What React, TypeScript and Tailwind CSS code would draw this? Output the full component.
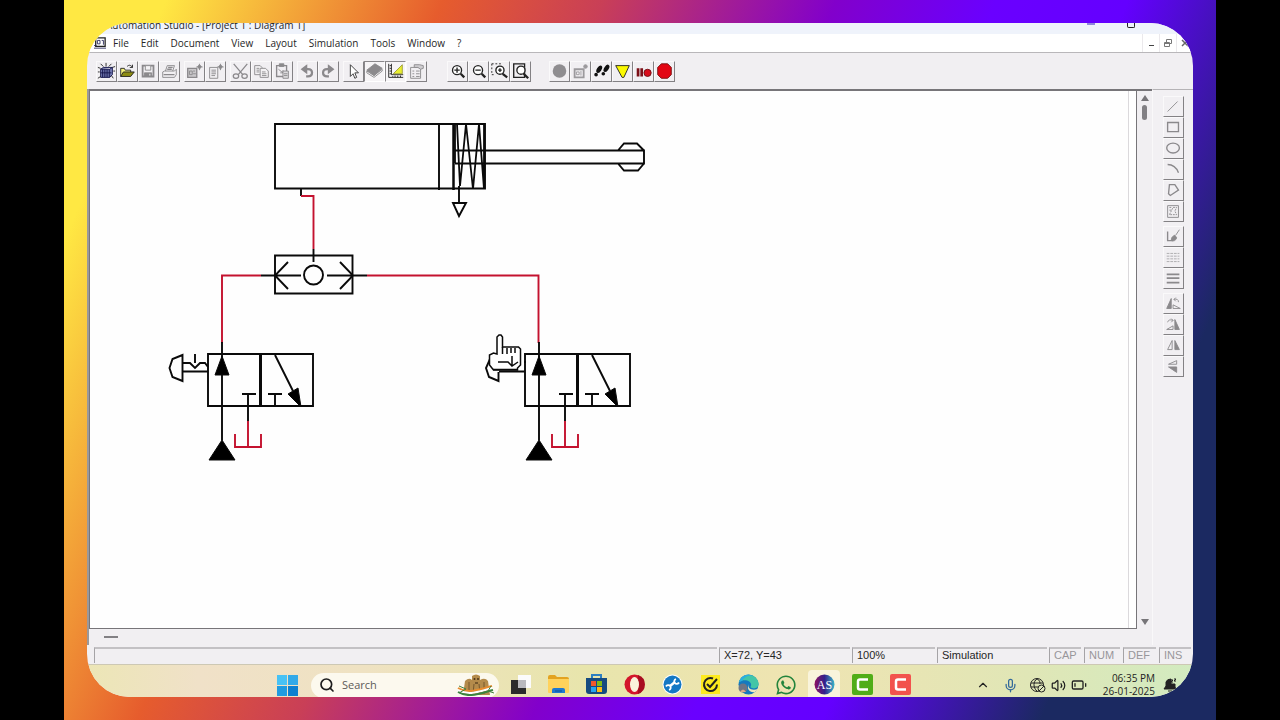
import type { ReactNode } from 'react';
import { clsx } from 'clsx';
import { BatteryLow, ChevronUp, Mic, Search, Volume2 } from 'lucide-react';
import { FaWhatsapp } from 'react-icons/fa';

const menus = ['File', 'Edit', 'Document', 'View', 'Layout', 'Simulation', 'Tools', 'Window', '?'];

type Tool = { name: string; icon: ReactNode; pressed?: boolean };

const GREY = '#8b898c';

const fileTools: Tool[] = [
  {
    name: 'New project',
    icon: (
      <g stroke="#14144a" fill="none">
        <path d="M4 8h10v9H4z M14 8l3-2v8l-3 3 M4 8l3-2h10" fill="#7c84bc" />
        <path d="M6 8v9 M8 8v9 M10 8v9 M12 8v9 M4 12h12" />
        <path d="M10 1v4 M4 2l3 3 M16 2l-3 3 M1 6l3 1 M20 5l-3 1 M1 18l3-2 M18 18l-2-3 M18 10h2 M1 11h2" stroke="#222" />
      </g>
    ),
  },
  {
    name: 'Open',
    icon: (
      <g stroke="#222" fill="none">
        <path d="M3 16V7h4l1 2h6v2" fill="#f5f27a" />
        <path d="M3 16l3-5h12l-4 5z" fill="#8d8c12" />
        <path d="M10 5c2-2 4-2 6 1 M16 3v3h-3" />
      </g>
    ),
  },
  {
    name: 'Save',
    icon: (
      <g stroke={GREY} fill="none">
        <path d="M4 4h12v12H4z" strokeWidth="2" />
        <path d="M7 4h6v5H7z" fill="#f4f2f4" />
        <path d="M6 12h8v4H6z" fill={GREY} />
        <path d="M12 13v2" stroke="#fff" />
      </g>
    ),
  },
  {
    name: 'Print',
    icon: (
      <g stroke={GREY} fill="none">
        <path d="M6 10l2-6h8l-2 6" />
        <path d="M3 11l2-1h11l2-2v6l-2 3H3z" />
        <path d="M4 14h12 M9 6h5 M8 8h5" strokeWidth="1.5" />
      </g>
    ),
  },
];

const insertTools: Tool[] = [
  {
    name: 'Insert diagram',
    icon: (
      <g stroke={GREY} fill="none">
        <path d="M3 7h10v10H3z" fill="#c9c7ca" strokeWidth="1.5" />
        <path d="M5 10h3v4H5z M9 10h2 M9 13h3" />
        <path d="M16 2v7 M12.500 5.500h7 M14 5l2-2 2 2-2 3z" fill={GREY} />
      </g>
    ),
  },
  {
    name: 'Insert report',
    icon: (
      <g stroke={GREY} fill="none">
        <path d="M4 6h9v12H4z" />
        <path d="M6 9h5 M6 11h5 M6 13h5 M6 15h4" />
        <path d="M16 2v7 M12.500 5.500h7 M14 5l2-2 2 2-2 3z" fill={GREY} />
      </g>
    ),
  },
];

const editTools: Tool[] = [
  {
    name: 'Cut',
    icon: (
      <g stroke={GREY} fill="none" strokeWidth="1.400">
        <path d="M3 2l10 12 M18 2L8 14" />
        <ellipse cx="5.500" cy="15.500" rx="3" ry="2.500" />
        <ellipse cx="15" cy="15.500" rx="3" ry="2.500" />
      </g>
    ),
  },
  {
    name: 'Copy',
    icon: (
      <g stroke={GREY} fill="#f4f2f4">
        <path d="M3 4h6l2 2v8H3z" />
        <path d="M9 7h6l3 3v7H9z" />
        <path d="M5 7h3 M5 9h3 M5 11h3 M11 11h4 M11 13h5 M11 15h5" />
      </g>
    ),
  },
  {
    name: 'Paste',
    icon: (
      <g stroke={GREY} fill="none">
        <path d="M4 4h11v12H4z" strokeWidth="1.500" />
        <path d="M7 2h5v3H7z" fill={GREY} />
        <path d="M6 8l5 4 M11 9v3H8" />
        <path d="M11 10h6v8h-6z" fill="#dddbde" />
        <path d="M12 13h4 M12 15h4" />
      </g>
    ),
  },
];

const historyTools: Tool[] = [
  {
    name: 'Undo',
    icon: <path d="M9 16h2c6 0 6-8 0-8H6 M9 5L5 8l4 3z" stroke={GREY} fill="none" strokeWidth="2.500" />,
  },
  {
    name: 'Redo',
    icon: <path d="M11 16H9c-6 0-6-8 0-8h5 M11 5l4 3-4 3z" stroke={GREY} fill="none" strokeWidth="2.500" />,
  },
];

const pointerTools: Tool[] = [
  {
    name: 'Select',
    icon: <path d="M7 3v13l3-3 2 5 2-1-2-5h4z" fill="#fff" stroke="#333" />,
  },
  {
    name: 'Layers',
    pressed: true,
    icon: (
      <g stroke={GREY}>
        <path d="M2 12l8 5 9-7v-2l-9 7-8-5z" fill="#f7f5f7" />
        <path d="M2 9l9-7 8 5-9 8z" fill={GREY} />
      </g>
    ),
  },
  {
    name: 'Rulers',
    pressed: true,
    icon: (
      <g fill="none">
        <path d="M3 2v15h16" stroke="#222" />
        <path d="M6 2v12h13" stroke="#222" />
        <path d="M4 4h2 M4 7h2 M4 10h2 M4 13h2 M7 16h1 M10 15v2 M13 15v2 M16 15v2" stroke="#222" />
        <path d="M8 13L18 3v10z" fill="#e9ef2e" stroke="#9b9b3a" />
      </g>
    ),
  },
  {
    name: 'Properties',
    icon: (
      <g stroke={GREY} fill="none">
        <path d="M4 6h11v12H4z" />
        <path d="M8 3h6l4 1v3l-3 1-3-2H8z" fill="#cfcdd0" />
        <path d="M6 10h2 M10 10h4 M6 13h2 M10 13h4 M6 16h2 M10 16h4" />
      </g>
    ),
  },
];

const zoomTools: Tool[] = [
  {
    name: 'Zoom in',
    icon: (
      <g stroke="#222" fill="none">
        <circle cx="10" cy="9" r="5" fill="#fff" strokeWidth="1.500" />
        <path d="M7 9h6 M10 6v6" strokeWidth="1.500" />
        <path d="M14 13l4 4" strokeWidth="2.500" />
      </g>
    ),
  },
  {
    name: 'Zoom out',
    icon: (
      <g stroke="#222" fill="none">
        <circle cx="10" cy="9" r="5" fill="#fff" strokeWidth="1.500" />
        <path d="M7 9h6" strokeWidth="1.500" />
        <path d="M14 13l4 4" strokeWidth="2.500" />
      </g>
    ),
  },
  {
    name: 'Zoom to selection',
    icon: (
      <g stroke="#222" fill="none">
        <path d="M2 2h11 M2 2v12h4" strokeDasharray="2 2" />
        <circle cx="11" cy="9" r="4.500" fill="#fff" strokeWidth="1.500" />
        <path d="M9 9h4 M11 7v4" strokeWidth="1.500" />
        <path d="M14 13l5 4" strokeWidth="2.500" />
      </g>
    ),
  },
  {
    name: 'Zoom to page',
    icon: (
      <g stroke="#222" fill="none">
        <path d="M3 2h12v15H3z" strokeWidth="1.500" />
        <circle cx="11" cy="9" r="4.500" fill="#fff" strokeWidth="1.500" />
        <path d="M14 13l5 5" strokeWidth="2.500" />
      </g>
    ),
  },
];

const simulationTools: Tool[] = [
  { name: 'Normal simulation', icon: <circle cx="10.500" cy="10" r="7.500" fill="#8f8d90" /> },
  {
    name: 'Simulate project',
    icon: (
      <g stroke="#9c9a9d" fill="none">
        <path d="M4 8h10v9H4z" strokeWidth="2" />
        <path d="M6 11h3v3H6z M11 10v5" />
        <circle cx="16" cy="5" r="2" fill="#9c9a9d" />
      </g>
    ),
  },
  {
    name: 'Step by step',
    icon: (
      <g fill="#111">
        <ellipse cx="8" cy="8" rx="2.500" ry="4.500" transform="rotate(32 8 8)" />
        <ellipse cx="4.500" cy="14" rx="2" ry="2" />
        <ellipse cx="16" cy="7" rx="2.500" ry="4.500" transform="rotate(32 16 7)" />
        <ellipse cx="12.500" cy="13" rx="2" ry="2" />
      </g>
    ),
  },
  {
    name: 'Slow motion',
    icon: <path d="M3 4h15l-6 13h-2z" fill="#fbf900" stroke="#222" />,
  },
  {
    name: 'Pause',
    icon: (
      <g>
        <path d="M3 7h3v9H3z M7 7h3v9H7z" fill="#7c1018" />
        <circle cx="15" cy="12" r="4" fill="#d90d1c" stroke="#6d0a10" />
      </g>
    ),
  },
  {
    name: 'Stop',
    icon: <path d="M7 2h7l4 4v8l-4 4H7l-4-4V6z" fill="#e30613" stroke="#711" />,
  },
];

const toolGroups = [fileTools, insertTools, editTools, historyTools, pointerTools];

const shapeTools: Tool[] = [
  { name: 'Line', icon: <path d="M4 16L15 5" stroke={GREY} /> },
  { name: 'Rectangle', icon: <path d="M4 5h12v10H4z" stroke={GREY} fill="none" strokeWidth="1.500" /> },
  { name: 'Ellipse', icon: <ellipse cx="10" cy="10" rx="7" ry="5.500" stroke={GREY} fill="none" strokeWidth="1.500" /> },
  { name: 'Arc', icon: <path d="M4 5c6 0 10 4 12 9" stroke={GREY} fill="none" strokeWidth="1.500" /> },
  { name: 'Polygon', icon: <path d="M6 4h6l4 6-9 6-2-2z" stroke={GREY} fill="none" strokeWidth="1.500" /> },
  {
    name: 'Picture',
    icon: (
      <g stroke={GREY} fill="none">
        <path d="M4 4h12v13H4z" />
        <path d="M6 14l4-8h4l-2 4 2 4H9z M6 6h2 M6 9h2" strokeDasharray="2 1" />
      </g>
    ),
  },
];

const strokeTools: Tool[] = [
  {
    name: 'Brush',
    icon: (
      <g stroke={GREY} fill={GREY}>
        <path d="M4 5v10h6" fill="none" strokeWidth="1.500" />
        <path d="M8 15c0-4 2-5 4-6l2 3c-1 3-3 4-6 3z M13 9l4-6" />
      </g>
    ),
  },
  { name: 'Line style', icon: <path d="M3 6h14 M3 9h14 M3 12h14 M3 15h14" stroke="#aaa8ab" strokeDasharray="3 1" /> },
  { name: 'Line width', icon: <path d="M3 6h14 M3 10h14 M3 15h14" stroke={GREY} strokeWidth="2" /> },
];

const transformTools: Tool[] = [
  {
    name: 'Rotate left',
    icon: (
      <g stroke={GREY} fill="none">
        <path d="M3 16l5-11v11z" fill={GREY} />
        <path d="M10 16h8l-8-4z M16 9c0-3-2-4-5-3 M13 4l-2 2 2 2" />
      </g>
    ),
  },
  {
    name: 'Rotate right',
    icon: (
      <g stroke={GREY} fill="none">
        <path d="M12 5v11h5z" fill={GREY} />
        <path d="M10 16H3l7-4z M4 8c1-3 3-3 6-2 M8 4l2 2-2 2" />
      </g>
    ),
  },
  {
    name: 'Mirror horizontally',
    icon: (
      <g stroke={GREY} fill="none">
        <path d="M4 15l5-10v10z" />
        <path d="M12 5v10h5z" fill={GREY} />
      </g>
    ),
  },
  {
    name: 'Mirror vertically',
    icon: (
      <g stroke={GREY} fill="none">
        <path d="M5 8l9-4v4z" />
        <path d="M5 11h9v6z" fill={GREY} />
      </g>
    ),
  },
];

function ToolButton({ name, icon, pressed }: Tool) {
  return (
    <button
      type="button"
      aria-label={name}
      aria-pressed={pressed}
      className={clsx(
        'size-[21px] border',
        pressed
          ? 'border-t-[#8a888b] border-l-[#8a888b] border-r-white border-b-white bg-[#f6f4f6]'
          : 'border-t-[#faf9fa] border-l-[#faf9fa] border-r-[#838184] border-b-[#838184] bg-[#f1eff2]',
      )}
    >
      <svg viewBox="0 0 21 21" className="block size-full">{icon}</svg>
    </button>
  );
}

function ToolGroup({ tools, vertical }: { tools: Tool[]; vertical?: boolean }) {
  return (
    <div className={clsx('flex', vertical && 'flex-col')}>
      {tools.map((tool) => (
        <ToolButton key={tool.name} {...tool} />
      ))}
    </div>
  );
}

// 3/2 way valve with its supply, exhaust tank and detent
function Valve() {
  return (
    <g>
      <path d="M208 354h105v52H208z M222 342v98" />
      <path d="M260.500 354v52" strokeWidth="3" />
      <path d="M242 394h14 M248 394v27 M268 394h14 M275 394v13 M275 355l18 36" />
      <path d="M248 421v26 M235 434v13h26v-13" stroke="#c4122f" />
      <path d="M222 356l-7 19h14z M301 407l-13-13 10-6z M222 440l-13 20h26z" fill="#000" strokeWidth="1" />
    </g>
  );
}

function Circuit() {
  return (
    <svg
      viewBox="90 91 600 400"
      className="block h-[400px] w-[600px] max-w-none"
      fill="none"
      stroke="#0a0a0a"
      strokeWidth="1.900"
      role="img"
      aria-label="Pneumatic circuit"
    >
      {/* Single acting cylinder */}
      <path d="M275 124h210v64.500H275z M439 124v66" />
      <path d="M453.500 124v66" strokeWidth="2.500" />
      <path d="M455 163V124h2l3 62 6-62 7 65 6-65 5 65v-64" strokeWidth="1.800" />
      <path d="M455 150.500h189v13H455 M618 150.500l6-7h13l7 7 M644 163.500l-6 7h-14l-6-7" />
      <path d="M459 186v17h-6l6 13 7-13h-7" />
      <path d="M301 188v8" />

      {/* Lines under pressure */}
      <g stroke="#c4122f">
        <path d="M301 196h12.500v53" />
        <path d="M261 275.500h-39V343" />
        <path d="M367 275.500h171.500V343" />
      </g>

      {/* Shuttle valve */}
      <path d="M275 255.500h77.500v38H275z M313.500 249v13" />
      <circle cx="313.500" cy="275" r="9.500" />
      <path d="M261 275.500h40 M288 262l-13 13.500 13 13.500 M327 275.500h40 M340 262l13 13.500-13 13.500" />

      <Valve />
      <path d="M182.500 355l-10 4-3 9 3 9 10 4z M182 371.500h26 M182 363h8l5 5 5-5h5l3 4 M195 354v9" />

      <g transform="translate(317 0)">
        <Valve />
        <path d="M173 359l-4 9 3 9 9.500 4v-9 M182 371.500h26 M208 363v-2" />
      </g>

      {/* Hand cursor */}
      <path
        d="M497 354v-17l2-2h2l1.500 2v10h16l2 2v16l-3 3v2h-24l-4-5v-10l4-2z"
        fill="#fff"
        strokeWidth="1.500"
      />
      <path d="M502.500 347v7 M507 348v6 M511 348v5 M515 348v5 M498 362h10l4 4 6-4 M512 356v9 M493 369.500h25" strokeWidth="1.500" />
    </svg>
  );
}

function StatusCell({ children, className }: { children?: ReactNode; className: string }) {
  return <div className={clsx('border-t-2 border-l border-t-[#c3c1c4] border-l-[#a5a3a6] pl-1 leading-3', className)}>{children}</div>;
}

const pinnedApps: Tool[] = [
  {
    name: 'Task view',
    icon: (
      <g>
        <path d="M8 1h13v13H8z" fill="#fbfbfb" />
        <path d="M1 6h15v14H1z" fill="#2b2b2b" />
        <path d="M8 6h8v8H8z" fill="#b9b9bd" />
      </g>
    ),
  },
  {
    name: 'File Explorer',
    icon: (
      <g>
        <path d="M0 3q0-2 2-2h5l2 2h10q2 0 2 2v13H0z" fill="#e3a321" />
        <path d="M0 5h21v13q0 1-1 1H1q-1 0-1-1z" fill="#ffd25c" />
        <path d="M4 19v-3q0-2 2-2h9q2 0 2 2v3z" fill="#1f78cf" />
        <path d="M7 17h7" stroke="#0c4f96" />
      </g>
    ),
  },
  {
    name: 'Microsoft Store',
    icon: (
      <g>
        <path d="M6 4V1h9v3" stroke="#2c7fc2" fill="none" strokeWidth="2" />
        <path d="M0 4h21v13q0 3-3 3H3q-3 0-3-3z" fill="#164b80" />
        <path d="M5 7h5v5H5z" fill="#f1582c" />
        <path d="M11 7h5v5h-5z" fill="#7fba18" />
        <path d="M5 13h5v5H5z" fill="#27a5ef" />
        <path d="M11 13h5v5h-5z" fill="#fdbb17" />
      </g>
    ),
  },
  {
    name: 'Opera',
    icon: (
      <g>
        <circle cx="10.500" cy="10.500" r="10" fill="#d3152b" />
        <path d="M14 1a10 10 0 0 1 0 19z" fill="#a80d20" />
        <ellipse cx="10.500" cy="10.500" rx="4.500" ry="7.500" fill="#faf2dc" />
      </g>
    ),
  },
  {
    name: 'Repair tool',
    icon: (
      <g>
        <circle cx="10.500" cy="10.500" r="10" fill="#fff" />
        <circle cx="10.500" cy="10.500" r="9" fill="#1478c4" />
        <path d="M8 12l5-4" stroke="#fff" strokeWidth="2.500" />
        <path d="M14 5a2.500 2.500 0 1 0 3 3.500 M7 16a2.500 2.500 0 1 0-3-3.500" fill="none" stroke="#fff" strokeWidth="1.800" />
      </g>
    ),
  },
  {
    name: 'Norton',
    icon: (
      <g fill="none">
        <path d="M1 1h19v19H1z" fill="#fdea1e" />
        <path d="M13 4.500a6.500 6.500 0 1 0 4 6" stroke="#222" strokeWidth="2" />
        <path d="M7 10l3 3 7-8" stroke="#222" strokeWidth="2" />
      </g>
    ),
  },
  {
    name: 'Microsoft Edge',
    icon: (
      <g>
        <circle cx="10.500" cy="10.500" r="10" fill="#157abf" />
        <path d="M1 8a10 10 0 0 1 19.500 1c1 5-5 7-8 4 3-5-5-9-11.500-5z" fill="#43c6a7" />
        <path d="M1 8C3 1 10-1 15 2c-5-1-9 1-11 5z" fill="#2baee0" />
        <path d="M11 10c-2 4 2 7 9 5l-3 3c-5 1-9-3-6-8z" fill="#f0e8bd" />
        <circle cx="5" cy="14" r="4.500" fill="#6e7585" />
        <path d="M2 18q3-5 6 0z" fill="#d7a98d" />
      </g>
    ),
  },
];

const recorderApps = [
  { name: 'Camtasia', color: '#50ad18' },
  { name: 'Camtasia Recorder', color: '#f2524d' },
];

function Taskbar() {
  return (
    <footer className="flex h-[33px] shrink-0 items-center overflow-hidden border-t border-[#cdc8b4] bg-[linear-gradient(90deg,#ece6b6_0%,#f0e1c8_10%,#efe2c2_25%,#e8e5ac_45%,#efe4b2_65%,#e0e6b6_85%,#d2ebc0_100%)] pl-[184px] pt-2 font-['Open_Sans','Noto_Sans',sans-serif]">
      <div className="flex w-8 shrink-0 justify-center">
        <button type="button" aria-label="Start" className="grid size-[21px] grid-cols-2 gap-px">
          <span className="bg-[#48c2f4]" />
          <span className="bg-[#32a9e8]" />
          <span className="bg-[#209be0]" />
          <span className="bg-[#0d7fd0]" />
        </button>
      </div>
      <label className="ml-2 flex h-[25px] w-[188px] shrink-0 items-center rounded-full bg-[#fcf9ee] pl-2">
        <Search className="size-4 text-[#1c1c1c]" strokeWidth={2.5} />
        <input
          type="search"
          placeholder="Search"
          aria-label="Search"
          className="ml-[7px] w-20 min-w-0 flex-1 text-[11px] leading-4 outline-none placeholder:text-[#5c5b58]"
        />
        <svg viewBox="0 0 38 22" className="mr-1 h-[22px] w-[38px]">
          <path d="M6 21l2-14q4-4 7-1V2q4-3 8 0v4q5-3 8 1l2 14z" fill="#b48b4b" />
          <path d="M12 8v12 M27 8v12 M17 10l-1 10 M22 10l1 10" stroke="#76582d" fill="none" />
          <circle cx="17.500" cy="5" r="1" fill="#4c3417" />
          <circle cx="21" cy="5" r="1" fill="#4c3417" />
          <path d="M18 8h3v2h-3z" fill="#76582d" />
          <path d="M1 14c10 6 20 2 34-2" stroke="#e88b2d" fill="none" strokeWidth="2" />
          <path d="M1 16c10 6 20 2 34-2" stroke="#fff" fill="none" strokeWidth="2" />
          <path d="M1 18c10 6 20 2 35-2" stroke="#3b8440" fill="none" strokeWidth="2" />
          <path d="M2 12l7 3-7 4 M34 12l-3 5 6 2" stroke="#44813e" fill="none" />
        </svg>
      </label>
      <div className="ml-[2px] flex shrink-0">
        {pinnedApps.map(({ name, icon }) => (
          <button key={name} type="button" aria-label={name} className="flex w-[38px] justify-center">
            <svg viewBox="0 0 21 21" className="size-[21px]">{icon}</svg>
          </button>
        ))}
        <button type="button" aria-label="WhatsApp" className="flex w-[38px] justify-center">
          <FaWhatsapp className="size-[22px] text-[#23843c]" />
        </button>
        <button type="button" aria-label="Automation Studio" className="flex w-[38px] justify-center">
          <span className="-my-1 flex w-8 justify-center rounded-t bg-[#f9f4dc] py-1">
            <svg viewBox="0 0 21 21" className="size-[21px]">
              <defs>
                <linearGradient id="studio">
                  <stop offset="0" stopColor="#8f1160" />
                  <stop offset="0.5" stopColor="#33208c" />
                  <stop offset="1" stopColor="#39b6c8" />
                </linearGradient>
              </defs>
              <circle cx="10.500" cy="10.500" r="10" fill="url(#studio)" />
              <text x="10.500" y="15" textAnchor="middle" fill="#fff" className="font-['Liberation_Serif',serif] text-[12px]">AS</text>
            </svg>
          </span>
        </button>
        {recorderApps.map(({ name, color }) => (
          <button key={name} type="button" aria-label={name} className="flex w-[38px] justify-center">
            <svg viewBox="0 0 21 21" className="size-[21px]">
              <rect width="21" height="21" rx="2" fill={color} />
              <path d="M16 5.500H8q-2 0-2 2v6q0 2 2 2h8" fill="none" stroke="#fff" strokeWidth="2.500" />
            </svg>
          </button>
        ))}
      </div>
      <div className="ml-auto flex shrink-0 items-center pr-4 text-[#222]">
        <ChevronUp className="size-[14px]" />
        <Mic className="ml-[13px] size-[15px] text-[#32699a]" />
        <svg viewBox="0 0 16 16" className="ml-3 size-4" fill="none" stroke="currentColor">
          <circle cx="7" cy="8" r="6.500" />
          <path d="M1 6h12 M1 10h7 M7 14C3 11 3 4 7 2c3 1 3 4 3 5" />
          <circle cx="11.500" cy="11.500" r="3.500" fill="#dfe8bc" />
          <path d="M9 14l5-5" />
        </svg>
        <Volume2 className="ml-[5px] size-[15px]" />
        <BatteryLow className="ml-[5px] size-4" />
        <time className="ml-2 w-[60px] text-right text-[10px] leading-[13px]">
          06:35 PM
          <br />
          26-01-2025
        </time>
        <svg viewBox="0 0 14 14" className="ml-2 size-[14px]" fill="none" stroke="currentColor">
          <path d="M1 11l2-3V4q1-3 5-3v5h4v3l1 2z M5 13h4" fill="currentColor" />
          <path d="M8 2h2l-2 2h2 M11 1h2l-2 2h2" />
        </svg>
      </div>
    </footer>
  );
}

export default function App() {
  return (
    <div className="flex min-h-screen justify-center bg-black">
      <div className="flex w-9/10 bg-[linear-gradient(113deg,#ffe843_0%,#ffe843_7%,#e65c2d_26%,#c93f57_37%,#8200cb_53%,#6a00ff_64%,#6400ff_73%,#1b2961_88%)] p-[23px]">
        <main className="flex min-w-0 flex-1 flex-col overflow-hidden rounded-[43px] bg-[#f1eff2] font-['Open_Sans','Noto_Sans',sans-serif] text-[#262626]">
          <header className="flex h-[11px] shrink-0 items-end justify-between overflow-hidden bg-[#eff3fb] pl-[19px] pr-[58px]">
            <h1 className="text-[10px] leading-[18px]">Automation Studio - [Project 1 : Diagram 1]</h1>
            <div className="flex h-full items-start gap-8">
              <button type="button" aria-label="Minimize" className="h-[2px] w-2 bg-[#8f86dc]" />
              <button type="button" aria-label="Restore" className="h-[5px] w-2 rounded-b-xs border-x border-b border-[#222]" />
            </div>
          </header>

          <nav className="flex h-[19px] shrink-0 items-center border-b border-[#b9b7ba] bg-white pl-[6px]">
            <svg viewBox="0 0 14 14" className="h-3 w-[14px]" fill="none" stroke="#222">
              <path d="M2 1h11v10H2z" strokeWidth="1.500" />
              <path d="M0 13h14 M4 4h3v4H4z M9 4h2v5 M0 10h3" stroke="#262658" />
            </svg>
            {menus.map((menu) => (
              <button key={menu} type="button" className="px-[6px] text-[10px] leading-4">{menu}</button>
            ))}
            <div className="ml-auto flex h-full">
              <button type="button" aria-label="Minimize document" className="flex w-[17px] items-center justify-center border-l border-[#ebe9ec]">
                <span className="mt-[5px] h-px w-[5px] bg-[#444]" />
              </button>
              <button type="button" aria-label="Restore document" className="flex w-[17px] items-center justify-center border-l border-[#ebe9ec]">
                <svg viewBox="0 0 8 8" className="size-2" fill="none" stroke="#777">
                  <path d="M0.500 3.500h5v4h-5z M2.500 3V0.500h5v4H6 M0.500 4.500h5" />
                </svg>
              </button>
              <button type="button" aria-label="Close document" className="flex w-[17px] items-center justify-center border-l border-[#ebe9ec]">
                <svg viewBox="0 0 8 8" className="size-2" stroke="#666" strokeWidth="1.500">
                  <path d="M1 1l6 6 M7 1L1 7" />
                </svg>
              </button>
            </div>
          </nav>

          <div className="flex h-9 shrink-0 items-center pl-[9px]">
            <div className="flex gap-1">
              {toolGroups.map((group) => (
                <ToolGroup key={group[0].name} tools={group} />
              ))}
            </div>
            <div className="ml-5 flex gap-[18px]">
              <ToolGroup tools={zoomTools} />
              <ToolGroup tools={simulationTools} />
            </div>
          </div>

          <div className="flex min-h-0 flex-1">
            <div className="flex min-w-0 flex-1 flex-col border-l-2 border-[#9a989b]">
              <div className="flex flex-1 border-t-2 border-[#777579]">
                <div className="min-w-0 flex-1 border-r border-b border-l border-[#777579] bg-white pr-[7px]">
                  <div className="h-full overflow-hidden border-r border-[#dbd9dc] bg-[#fefefe]">
                    <Circuit />
                  </div>
                </div>
                <div className="flex w-[15px] flex-col items-center py-1">
                  <svg viewBox="0 0 8 6" className="h-[6px] w-2"><path d="M4 0l4 6H0z" fill="#777579" /></svg>
                  <span className="mt-1 h-[15px] w-[5px] rounded-full bg-[#828084]" />
                  <svg viewBox="0 0 8 6" className="mt-auto h-[6px] w-2"><path d="M4 6l4-6H0z" fill="#777579" /></svg>
                </div>
              </div>
              <div className="flex h-4 shrink-0 items-center pl-[15px]">
                <span className="h-[2px] w-[14px] bg-[#828084]" />
              </div>
            </div>
            <aside className="flex w-[41px] shrink-0 flex-col gap-1 border-t border-l border-t-[#b5b3b6] border-l-[#f9f8f9] bg-[#f2f0f3] pt-[6px] pl-[10px]">
              <ToolGroup tools={shapeTools} vertical />
              <ToolGroup tools={strokeTools} vertical />
              <ToolGroup tools={transformTools} vertical />
            </aside>
          </div>

          <div className="flex h-[19px] shrink-0 gap-[2px] pt-[2px] pr-[2px] pb-px pl-[7px] font-['Liberation_Sans',sans-serif] text-[11px]">
            <StatusCell className="flex-1" />
            <StatusCell className="w-[131px]">X=72, Y=43</StatusCell>
            <StatusCell className="w-[83px]">100%</StatusCell>
            <StatusCell className="w-[110px]">Simulation</StatusCell>
            <div className="flex gap-[3px] text-[#98969a]">
              <StatusCell className="w-8">CAP</StatusCell>
              <StatusCell className="w-9">NUM</StatusCell>
              <StatusCell className="w-[33px]">DEF</StatusCell>
              <StatusCell className="w-8">INS</StatusCell>
            </div>
          </div>

          <Taskbar />
        </main>
      </div>
    </div>
  );
}
